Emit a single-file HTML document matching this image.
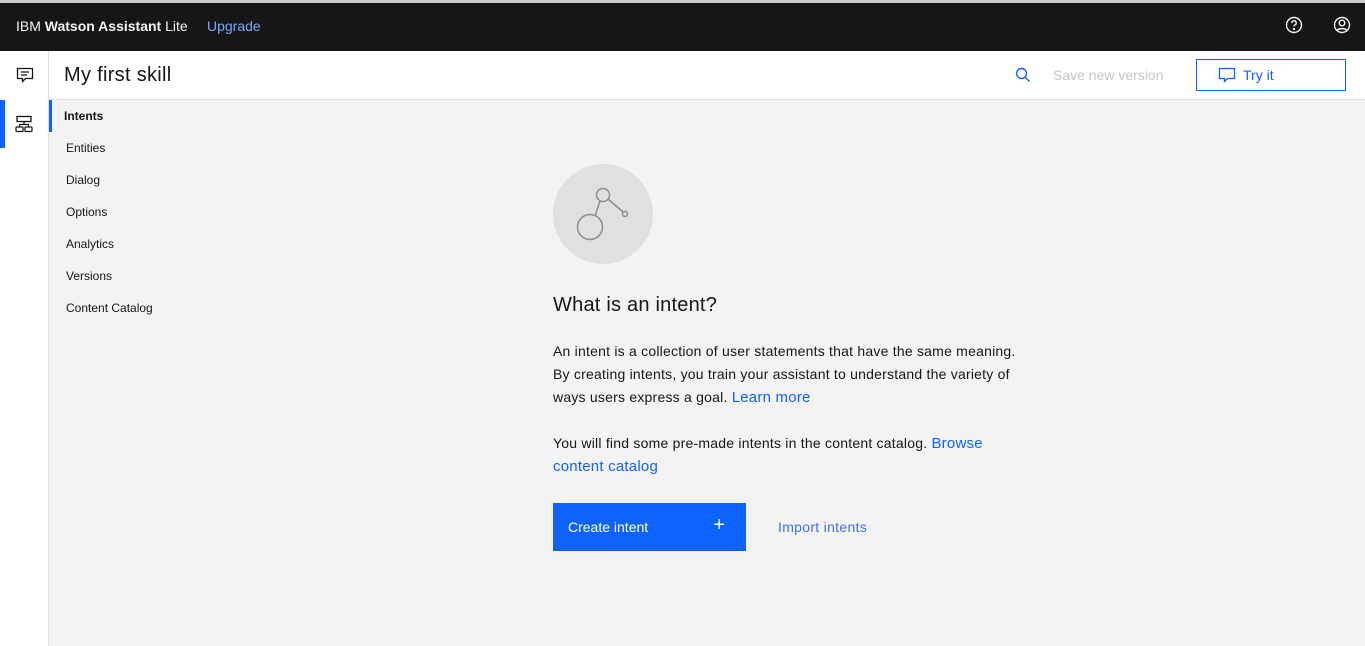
<!DOCTYPE html>
<html><head><style>
*{box-sizing:border-box;margin:0;padding:0}
body{width:1365px;height:646px;overflow:hidden;background:#f3f3f3;font-family:"Liberation Sans",sans-serif;position:relative;color:#161616}
.top{position:absolute;top:0;left:0;width:1365px;height:3px;background:#c8c8c8}
.hdr{position:absolute;top:3px;left:0;width:1365px;height:48px;background:#161616;color:#f4f4f4}
.hdr .b{position:absolute;left:16px;top:15px;font-size:14px}
.hdr .u{position:absolute;left:207px;top:15px;font-size:14px;color:#78a9ff}
.side{position:absolute;top:51px;left:0;width:49px;height:595px;background:#fff;border-right:1px solid #e0e0e0}
.bar{position:absolute;top:51px;left:49px;right:0;height:49px;background:#fff;border-bottom:1px solid #e0e0e0}
.nav{position:absolute;left:49px;top:100px}
.nav div{height:32px;line-height:32px;font-size:12px;padding-left:17px;color:#161616}
.p{position:absolute;left:553px;font-size:14px;line-height:23px;color:#161616;letter-spacing:0.22px}
a{color:#0f62fe;text-decoration:none;font-size:15px}
</style></head><body>
<div class="top"></div>
<div class="hdr"><span class="b">IBM <b>Watson Assistant</b> Lite</span><span class="u">Upgrade</span>
<svg style="position:absolute;left:1285px;top:13px" width="18" height="18" viewBox="0 0 18 18" fill="none" stroke="#f4f4f4" stroke-width="1.4"><circle cx="9" cy="9" r="7.5"/><path d="M6.8 7a2.2 2.2 0 1 1 3 2c-.6.3-.8.7-.8 1.4"/><circle cx="9" cy="13" r=".5" fill="#f4f4f4"/></svg>
<svg style="position:absolute;left:1333px;top:13px" width="18" height="18" viewBox="0 0 18 18" fill="none" stroke="#f4f4f4" stroke-width="1.4"><circle cx="9" cy="9" r="7.5"/><circle cx="9" cy="7" r="2.8"/><path d="M4 14.5c1.5-2.5 8.5-2.5 10 0"/></svg>
</div>
<div class="side">
<svg style="position:absolute;left:16px;top:16px" width="18" height="17" viewBox="0 0 18 17" fill="none" stroke="#161616" stroke-width="1.3"><path d="M1.5 1.5h15v10h-7l-3 3v-3h-5z"/><path d="M5 5h8M5 8h6"/></svg>
<div style="position:absolute;left:0;top:49px;width:5px;height:48px;background:#0f62fe"></div>
<svg style="position:absolute;left:15px;top:64px" width="18" height="18" viewBox="0 0 18 18" fill="none" stroke="#161616" stroke-width="1.3"><rect x="2" y="1.5" width="14" height="5"/><path d="M9 6.5v3M4.5 9.5h9v2.5M4.5 9.5v2.5"/><rect x="1" y="12" width="7" height="4.5" rx="1"/><rect x="10" y="12" width="7" height="4.5" rx="1"/></svg>
</div>
<div class="bar">
<span style="position:absolute;left:15px;top:13px;font-size:20px;letter-spacing:0.3px">My first skill</span>
<svg style="position:absolute;left:966px;top:16px" width="16" height="16" viewBox="0 0 16 16" fill="none" stroke="#0f62fe" stroke-width="1.4"><circle cx="6.5" cy="6.5" r="5"/><path d="M10 10l4.5 4.5"/></svg>
<span style="position:absolute;left:1004px;top:16px;font-size:14px;color:#c6c6c6">Save new version</span>
<div style="position:absolute;left:1147px;top:8px;width:150px;height:32px;border:1px solid #0f62fe">
<svg style="position:absolute;left:21px;top:7px" width="18" height="17" viewBox="0 0 18 17" fill="none" stroke="#0f62fe" stroke-width="1.3"><path d="M1.5 1.5h15v10h-7l-3 3v-3h-5z"/><path d="M6 6.5h.1M9 6.5h.1M12 6.5h.1" stroke-width="1.8"/></svg>
<span style="position:absolute;left:46px;top:7px;font-size:14px;color:#0f62fe">Try it</span></div>
</div>
<div style="position:absolute;left:49px;top:100px;width:3px;height:32px;background:#0f62fe"></div>
<div class="nav"><div style="font-weight:bold;padding-left:15px">Intents</div><div>Entities</div><div>Dialog</div><div>Options</div><div>Analytics</div><div>Versions</div><div>Content Catalog</div></div>
<div style="position:absolute;left:553px;top:164px;width:100px;height:100px;border-radius:50%;background:#e0e0e0">
<svg width="100" height="100" viewBox="0 0 100 100" fill="none" stroke="#8d8d8d" stroke-width="1.5"><circle cx="37" cy="63" r="12.5"/><circle cx="50" cy="31" r="6.5"/><circle cx="72" cy="50" r="2.5"/><path d="M47 37l-5 15M55 35l15 13"/></svg></div>
<div class="p" style="top:294px;font-size:20px">What is an intent?</div>
<div class="p" style="top:340px">An intent is a collection of user statements that have the same meaning.<br>By creating intents, you train your assistant to understand the variety of<br>ways users express a goal. <a>Learn more</a></div>
<div class="p" style="top:432px">You will find some pre-made intents in the content catalog. <a>Browse</a><br><a>content catalog</a></div>
<div style="position:absolute;left:553px;top:503px;width:193px;height:48px;background:#0f62fe;color:#fff;font-size:14px">
<span style="position:absolute;left:15px;top:16px">Create intent</span><span style="position:absolute;right:21px;top:11px;font-size:20px">+</span></div>
<span style="position:absolute;left:778px;top:519px;font-size:14px;color:#3d6ff0;letter-spacing:0.3px">Import intents</span>
</body></html>
